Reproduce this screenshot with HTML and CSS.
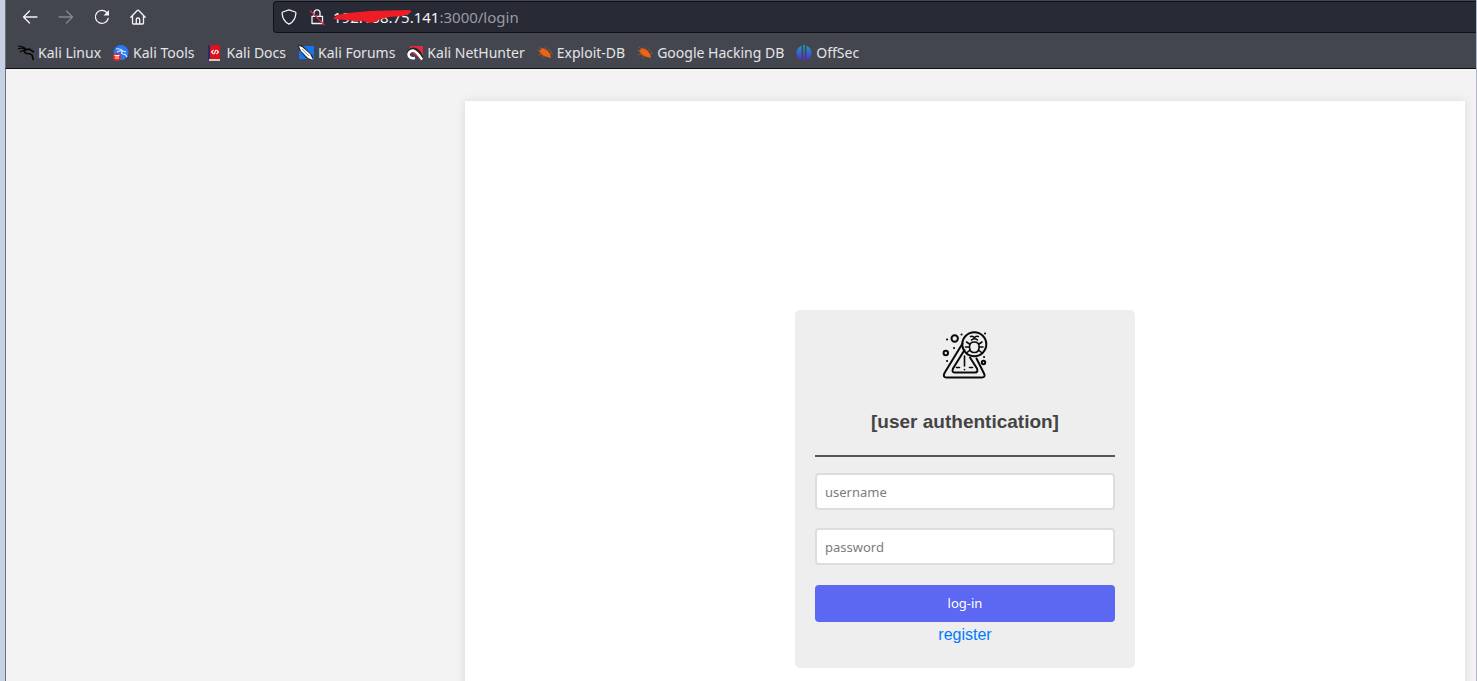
FILE: index.html
```html
<!DOCTYPE html>
<html lang="en">
<head>
<meta charset="utf-8">
<title>Login</title>
<link rel="stylesheet" href="styles.css">
</head>
<body>
<div class="window">
  <header class="chrome">
    <div class="toolbar">
      <nav class="nav-buttons" aria-label="Browser">
        <button class="nav-button" type="button" aria-label="Back"><svg viewBox="0 0 16 16"><path d="M15 8H1.5M7.5 2l-6 6 6 6"/></svg></button>
        <button class="nav-button" type="button" aria-label="Forward" disabled><svg viewBox="0 0 16 16"><path d="M1 8h13.500M8.500 2l6 6-6 6"/></svg></button>
        <button class="nav-button" type="button" aria-label="Reload"><svg viewBox="0 0 16 16"><path d="M14.200 9.500A6.500 6.500 0 1 1 12.800 3.500L14 5"/><path class="solid" d="M15 1v5.500H9.500z"/></svg></button>
        <button class="nav-button" type="button" aria-label="Home"><svg viewBox="0 0 16 16"><path d="M.8 8.200 7 1.700q1-1 2 0l6.200 6.500M2.500 7v7q0 1 1 1h9q1 0 1-1V7M6.300 15v-4.500q0-1.500 1.700-1.500t1.700 1.500V15"/></svg></button>
      </nav>
      <div class="address">
        <svg class="address-icon" viewBox="0 0 16 16"><path d="M8 .8 14.300 3q.7.300.6 1Q14.500 12 8 15.200 1.500 12 1.100 4q0-.7.6-1z"/></svg>
        <svg class="address-icon" viewBox="0 0 16 16"><path d="M5 7.300V3.800a3 3 0 0 1 6 0v3.500M3 7.300h10.500V14.500H3z"/><path class="slash" d="M1.500 2 15 15.500"/></svg>
        <div class="url" role="textbox" aria-label="Address"><span class="host">192.168.75.141</span>:3000/login
          <svg class="scribble" viewBox="0 0 80 14"><path d="M0 9 4 5 15 3 37 1 76 0q4 1 1 3l-7 3-13 1-10 2-5 3-6 1-6-2h-8l-10-1z"/></svg>
        </div>
      </div>
    </div>
    <nav class="bookmarks" aria-label="Bookmarks">
      <a class="bookmark" href="#"><svg viewBox="0 0 16 16"><path d="M0 1q5 0 8 3M0 4q5-2 9 1M2 7q3-2 6-2" fill="none" stroke="#050607" stroke-width="1.200"/><path d="M7 4q-2 4 2 4.500 5 0 5.500 3 .4 2 1 3.500M8 5q3-2 6 1l2 1" fill="none" stroke="#050607" stroke-width="1.700"/></svg>Kali Linux</a>
      <a class="bookmark" href="#"><svg viewBox="0 0 16 16"><circle cx="8" cy="7.500" r="7.500" fill="#2678f5"/><path d="M3 4q5-1 7 2-3 2 0 3 3 0 4 3M4 7q4-2 6-1l3 1" fill="none" stroke="#dceaff" stroke-width="1.200"/><circle cx="4" cy="12" r="4" fill="#e9262c"/><path d="M1.500 10.500h5M3 10.500V14M5 10.500V14" fill="none" stroke="#fff"/></svg>Kali Tools</a>
      <a class="bookmark" href="#"><svg viewBox="0 0 16 16"><path d="M1 0h3v15H1z" fill="#252c67"/><path d="M3 0h10v14H3z" fill="#df1118"/><path d="M2 14h11v2H2z" fill="#d8c8ca"/><path d="M6.500 5 4.500 7l2 2M9.500 5l2 2-2 2M8.800 5l-1.500 4" fill="none" stroke="#fff" stroke-width="1.100"/></svg>Kali Docs</a>
      <a class="bookmark" href="#"><svg viewBox="0 0 16 16"><path d="M1 1h15v13H1z" fill="#1974ed"/><path d="M0 0h4l11 11v5L8 13 1 5z" fill="#252a34"/><path d="m1 1 3 1 8 7 3 6-5-2-7-7z" fill="#fff"/><path d="m4 4 7 7" stroke="#8190a5"/></svg>Kali Forums</a>
      <a class="bookmark" href="#"><svg viewBox="0 0 16 16"><path d="M3 1h13v12l-3 1L2 5z" fill="#e22b38"/><path d="M2 11q-1-6 4-6.500 6 0 9 10" fill="none" stroke="#20232a" stroke-width="4"/><path d="M8 13q-6 1-6.500-3.500Q2 6 6 5.500q4 1 9 9" fill="none" stroke="#fff" stroke-width="2.600"/></svg>Kali NetHunter</a>
      <a class="bookmark" href="#"><svg viewBox="0 0 16 16"><path d="M2 6 5 3l5 2 3 4 1 4-4-1-5-2z" fill="#ef6412"/><path d="m0 5 4 1M2 2l3 3M8 2l1 4M11 4l4 3M12 8l4 1M1 10l5-1M5 13l3-2" stroke="#a9532c" stroke-width=".8"/></svg>Exploit-DB</a>
      <a class="bookmark" href="#"><svg viewBox="0 0 16 16"><path d="M2 6 5 3l5 2 3 4 1 4-4-1-5-2z" fill="#ef6412"/><path d="m0 5 4 1M2 2l3 3M8 2l1 4M11 4l4 3M12 8l4 1M1 10l5-1M5 13l3-2" stroke="#a9532c" stroke-width=".8"/></svg>Google Hacking DB</a>
      <a class="bookmark" href="#"><svg viewBox="0 0 16 16"><defs><linearGradient id="offsec" gradientUnits="userSpaceOnUse" x1="0" y1="0" x2="0" y2="16"><stop stop-color="#10a9b8"/><stop offset="1" stop-color="#5c20e0"/></linearGradient></defs><path d="M5.500.8v14Q.5 13 .5 8t5-7.200M10.500.8v14q5-1.800 5-6.800t-5-7.200M7.200 0h1.600v16H7.200z" fill="url(#offsec)"/></svg>OffSec</a>
    </nav>
  </header>
  <main class="page">
    <section class="panel">
      <form class="card">
        <svg class="logo" viewBox="-2 0 50 50" aria-hidden="true">
          <path d="M20.500 13.500 2.500 43q-2 4.500 2 4.500h35q4.500 0 2.500-4L34.500 28.500M22.500 20 11 38.500q-1.500 4 1.500 4h20.500q3.500 0 2-4L28 27.500"/>
          <path class="thin" d="M22.500 26v10M22.500 39.500v.3M14.500 37.500h3M27.500 37.500h3"/>
          <circle cx="32.300" cy="14.300" r="12"/>
          <path class="thin" d="M27.500 17q0-5 4.800-5t4.800 5q0 5.500-4.800 5.500t-4.800-5.500M29.500 10q3-2.500 6 0M28.500 6.500q2.500-1 3.800 1.500 1.500-2.500 4-1.500M27.500 14l-3-2M37 14l3-2M27 17h-3.500M37.500 17h3.500M28 20l-3 2.500M36.500 20l3 2.500"/>
          <circle cx="12.700" cy="8.500" r="3.200"/><circle cx="3.800" cy="23" r="2.200"/><circle cx="41.500" cy="32.500" r="1.700"/>
          <path d="M5 9.500h.1M19.500 4.500h.1M12 18h.1M5 31h.1M43 3.500h.1M42 27h.1"/>
        </svg>
        <h1 class="title">[user authentication]</h1>
        <hr class="rule">
        <input class="field" type="text" placeholder="username" aria-label="username">
        <input class="field" type="password" placeholder="password" aria-label="password">
        <button class="submit" type="submit">log-in</button>
        <a class="register" href="#">register</a>
      </form>
    </section>
  </main>
</div>
</body>
</html>
```
FILE: styles.css
```css
* {
  box-sizing: border-box;
}

body {
  margin: 0;
  height: 100vh;
  overflow: hidden;
  font-family: "Liberation Sans", Arial, sans-serif;
}

.window {
  height: 100%;
  display: flex;
  flex-direction: column;
  padding-left: 5px;
  padding-right: 1px;
  background: linear-gradient(90deg, #c8d1e4 50%, #b1b7c9 50%);
}

.chrome {
  border-left: 1px solid #6e7178;
  border-bottom: 1px solid #0e0f13;
  background: #43464e;
  font-family: "Noto Sans", sans-serif;
}

.toolbar {
  display: flex;
  padding-top: 1px;
}

.nav-buttons {
  display: flex;
  flex: 0 0 267px;
  align-items: center;
  gap: 20px;
  padding-left: 16px;
}

.nav-button {
  width: 16px;
  height: 16px;
  padding: 0;
  border: 0;
  background: none;
  color: #f4f4f6;
}

.nav-button:disabled {
  color: #85878d;
}

.nav-button svg,
.address-icon {
  display: block;
  width: 16px;
  height: 16px;
  fill: none;
  stroke: currentColor;
  stroke-width: 1.3;
  stroke-linecap: round;
  stroke-linejoin: round;
  overflow: visible;
}

.nav-button .solid {
  fill: currentColor;
  stroke: none;
}

.address {
  flex: 1;
  display: flex;
  align-items: center;
  gap: 12px;
  height: 32px;
  padding-left: 7px;
  border: 1px solid #101218;
  border-right: 0;
  border-radius: 4px 0 0 4px;
  background: #282a36;
  color: #f2f2f4;
}

.address-icon .slash {
  stroke: #e22850;
}

.url {
  position: relative;
  margin-left: -4px;
  font-size: 15px;
  line-height: 20px;
  color: #9a9ba3;
}

.host {
  color: #f4f4f6;
}

.scribble {
  position: absolute;
  left: 0;
  top: 3px;
  width: 80px;
  height: 14px;
  fill: #ee1c24;
}

.bookmarks {
  display: flex;
  align-items: center;
  gap: 12px;
  height: 35px;
  padding: 4px 0 0 12px;
}

.bookmark {
  display: flex;
  align-items: center;
  gap: 4px;
  font-size: 14px;
  line-height: 20px;
  color: #e4e4e6;
  text-decoration: none;
  white-space: nowrap;
}

.bookmark svg {
  width: 16px;
  height: 16px;
}

.page {
  flex: 1;
  min-height: 0;
  overflow: hidden;
  padding: 32px 11px 0;
  border-left: 1px solid #6e7178;
  background: #f3f3f3;
}

.panel {
  display: flex;
  justify-content: center;
  align-items: center;
  max-width: 1000px;
  height: 776px;
  margin-left: auto;
  background: #fff;
  box-shadow: 0 0 10px rgba(0, 0, 0, 0.1);
}

.card {
  display: flex;
  flex-direction: column;
  width: 340px;
  padding: 20px 20px 23px;
  border-radius: 5px;
  background: #eee;
}

.logo {
  align-self: center;
  width: 50px;
  height: 50px;
  fill: none;
  stroke: #090909;
  stroke-width: 2;
  stroke-linecap: round;
  stroke-linejoin: round;
}

.logo .thin {
  stroke-width: 1.6;
}

.title {
  margin: 20px 0 0;
  font-size: 19px;
  line-height: 44px;
  text-align: center;
  color: #444;
}

.rule {
  width: 100%;
  height: 2px;
  margin: 11px 0 16px;
  border: 0;
  background: #555;
}

.field {
  width: 100%;
  height: 37px;
  margin: 0 0 18px;
  padding: 8px;
  border: 2px solid #ddd;
  border-radius: 4px;
  background: #fff;
  font: 13px/17px "Noto Sans", sans-serif;
}

.field::placeholder {
  color: #7c7c7c;
}

.submit {
  height: 37px;
  margin-top: 2px;
  padding: 0;
  border: 0;
  border-radius: 4px;
  background: #5c67f2;
  color: #fff;
  font: 13px/17px "Noto Sans", sans-serif;
}

.register {
  align-self: center;
  margin-top: 3px;
  font-size: 16px;
  line-height: 20px;
  color: #007bff;
  text-decoration: none;
}
```
